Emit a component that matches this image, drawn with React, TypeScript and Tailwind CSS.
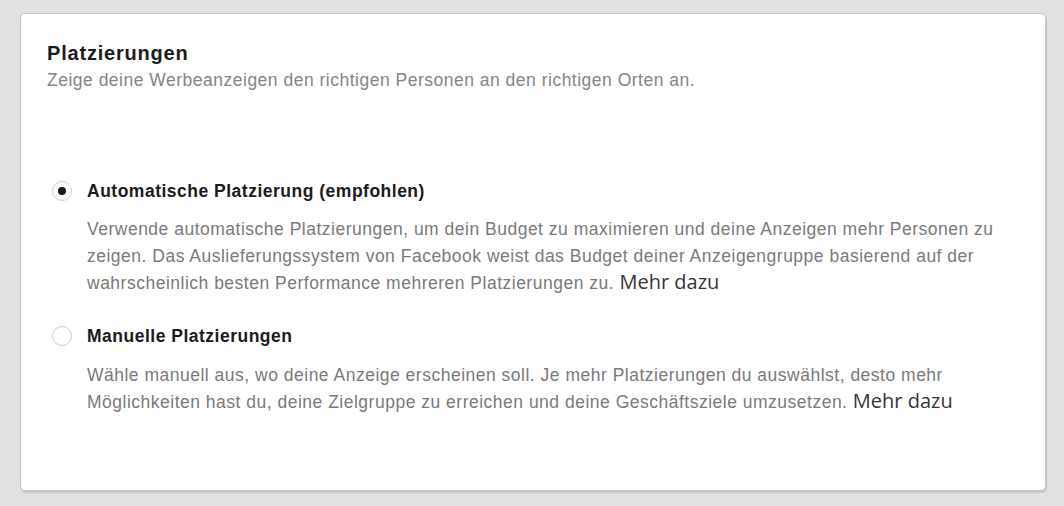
import React from "react";

function Radio({ checked }: { checked: boolean }) {
  return (
    <div className="flex h-[20px] w-[20px] shrink-0 items-center justify-center rounded-full border border-[#cfcfcf] bg-white">
      {checked && <div className="h-[8px] w-[8px] rounded-full bg-[#1a1a1a]" />}
    </div>
  );
}

function More() {
  return (
    <span className="text-[20px] leading-none tracking-normal text-[#363636]" style={{ fontFamily: '"Open Sans", sans-serif' }}>
      Mehr dazu
    </span>
  );
}

export default function App() {
  return (
    <div className="h-[506px] w-[1064px] bg-[#e1e1e1] pt-[13px] pl-[20px]" style={{ fontFamily: '"Liberation Sans", Arial, sans-serif' }}>
      <div className="h-[478px] w-[1026px] rounded-[5px] border border-[#c6c6c6] bg-white pl-[26px] pt-[27px] shadow-[1px_2px_1px_rgba(0,0,0,0.12)]">
        <h1 className="text-[20px] font-bold leading-[24px] tracking-[0.8px] text-[#1b1b1b]">Platzierungen</h1>
        <p className="mt-[5px] text-[17.5px] leading-[20px] tracking-[0.5px] text-[#858585]">
          Zeige deine Werbeanzeigen den richtigen Personen an den richtigen Orten an.
        </p>

        <div className="mt-[91px] flex items-center gap-[15px] pl-[5px]">
          <Radio checked />
          <span className="text-[17.5px] font-bold leading-[20px] tracking-[0.5px] text-[#1b1b1b]">Automatische Platzierung (empfohlen)</span>
        </div>
        <p className="mt-[15px] w-[980px] pl-[40px] text-[17.5px] leading-[27px] tracking-[0.5px] text-[#7a7a7a]">
          Verwende automatische Platzierungen, um dein Budget zu maximieren und deine Anzeigen mehr Personen zu
          <br />
          zeigen. Das Auslieferungssystem von Facebook weist das Budget deiner Anzeigengruppe basierend auf der
          <br />
          wahrscheinlich besten Performance mehreren Platzierungen zu. <More />
        </p>

        <div className="mt-[29px] flex items-center gap-[15px] pl-[5px]">
          <Radio checked={false} />
          <span className="text-[17.5px] font-bold leading-[20px] tracking-[0.5px] text-[#1b1b1b]">Manuelle Platzierungen</span>
        </div>
        <p className="mt-[16px] w-[980px] pl-[40px] text-[17.5px] leading-[27px] tracking-[0.5px] text-[#7a7a7a]">
          Wähle manuell aus, wo deine Anzeige erscheinen soll. Je mehr Platzierungen du auswählst, desto mehr
          <br />
          Möglichkeiten hast du, deine Zielgruppe zu erreichen und deine Geschäftsziele umzusetzen. <More />
        </p>
      </div>
    </div>
  );
}
